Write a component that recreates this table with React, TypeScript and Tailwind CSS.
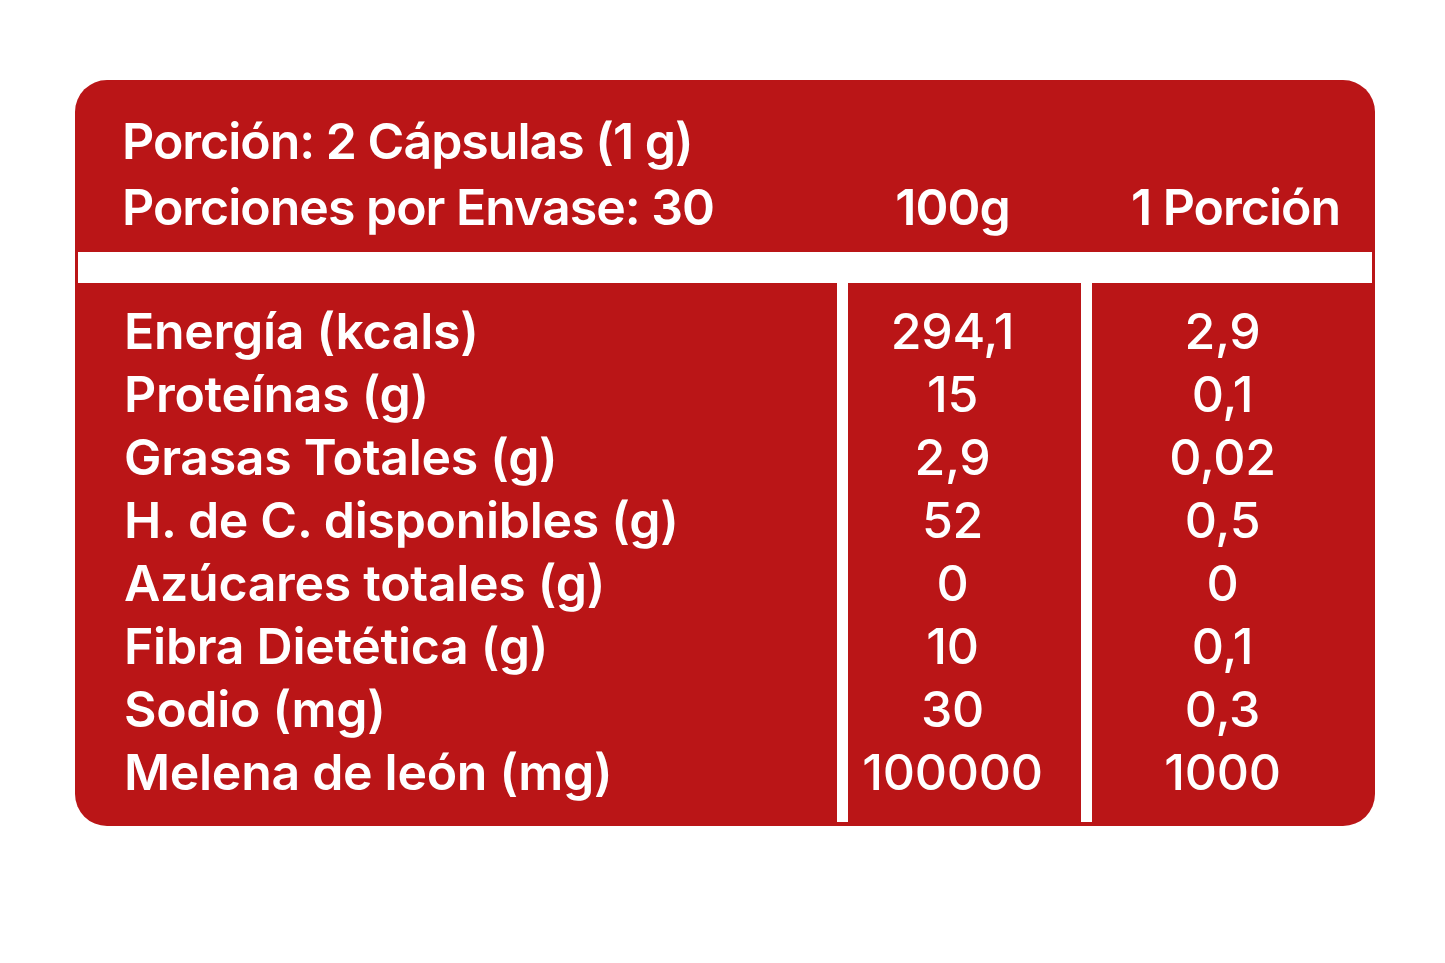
import React from 'react';

const RED = 'bg-[#ba1517]';

const ROWS: [string, string, string][] = [
  ['Energía (kcals)', '294,1', '2,9'],
  ['Proteínas (g)', '15', '0,1'],
  ['Grasas Totales (g)', '2,9', '0,02'],
  ['H. de C. disponibles (g)', '52', '0,5'],
  ['Azúcares totales (g)', '0', '0'],
  ['Fibra Dietética (g)', '10', '0,1'],
  ['Sodio (mg)', '30', '0,3'],
  ['Melena de león (mg)', '100000', '1000'],
];

export default function App() {
  return (
    <div
      className="w-full h-[963px] bg-white pt-[80px] pl-[75px]"
      style={{ fontFamily: 'Inter, "Noto Sans", sans-serif' }}
    >
      <div className={`w-[1300px] h-[746px] rounded-[32px] ${RED} overflow-hidden flex flex-col pb-[4px] text-white`}>
        {/* Header */}
        <div className="flex pt-[28px] pb-[12px] text-[50px] font-semibold leading-[66px] tracking-[-1px]">
          <div className="w-[762px] pl-[47px]">
            <p>Porción: 2 Cápsulas (1 g)</p>
            <p>Porciones por Envase: 30</p>
          </div>
          <div className="w-[11px]" />
          <div className="w-[233px] pr-[24px] flex flex-col justify-end text-center">
            <p>100g</p>
          </div>
          <div className="w-[11px]" />
          <div className="flex-1 flex flex-col justify-end text-center pl-[4px]">
            <p className="whitespace-nowrap">1 Porción</p>
          </div>
        </div>

        {/* Divider */}
        <div className="mx-[3px] h-[31px] bg-white" />

        {/* Body */}
        <div className="flex flex-1 text-[50px] leading-[63px] tracking-[-0.3px]">
          <div className="w-[762px] pl-[49px] pt-[17px] font-semibold">
            {ROWS.map(([label]) => (
              <p key={label} className="whitespace-nowrap">{label}</p>
            ))}
          </div>
          <div className="w-[11px] bg-white" />
          <div className="w-[233px] pr-[24px] pt-[17px] text-center font-medium">
            {ROWS.map(([label, per100]) => (
              <p key={label}>{per100}</p>
            ))}
          </div>
          <div className="w-[11px] bg-white" />
          <div className="flex-1 pr-[22px] pt-[17px] text-center font-medium">
            {ROWS.map(([label, , portion]) => (
              <p key={label}>{portion}</p>
            ))}
          </div>
        </div>
      </div>
    </div>
  );
}
